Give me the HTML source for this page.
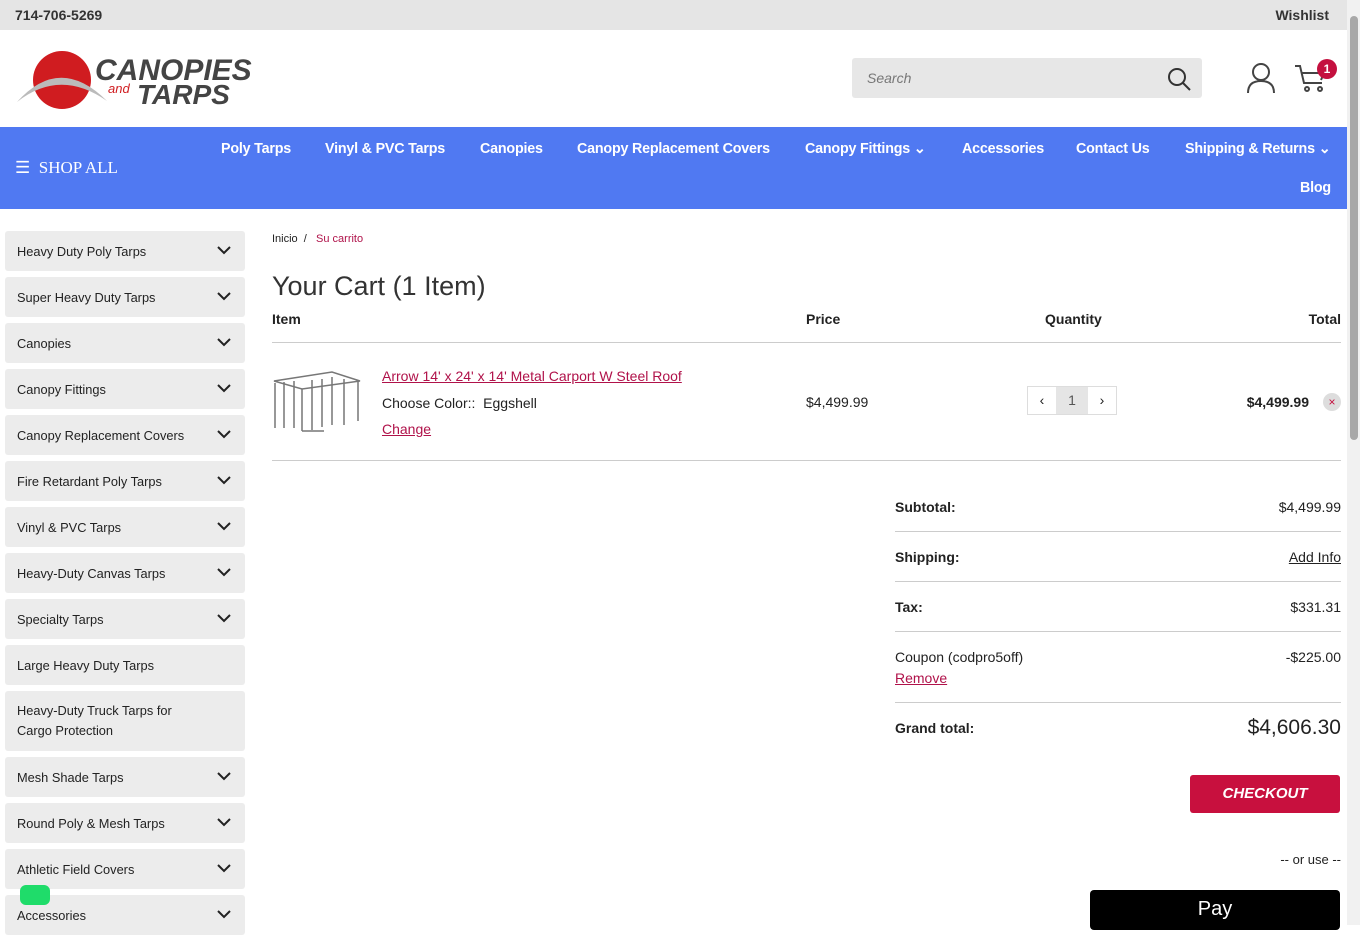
<!DOCTYPE html>
<html><head><meta charset="utf-8"><style>
*{box-sizing:border-box;margin:0;padding:0}
body{width:1360px;height:925px;overflow:hidden;font-family:"Liberation Sans",sans-serif;background:#fff;color:#222;position:relative}
.top{height:30px;background:#e5e5e5;font-size:14px;font-weight:bold;color:#333;position:relative}
.top .l{position:absolute;left:15px;top:7px}.top .r{position:absolute;right:31px;top:7px}
.hdr{height:97px;position:relative}
.search{position:absolute;left:852px;top:28px;width:350px;height:40px;background:#e7e7e7;border-radius:3px;font-style:italic;color:#777;font-size:14px;padding:12px 15px}
.nav{height:82px;background:#5079f2;position:relative;color:#fff}
.nav .sa{position:absolute;left:15px;top:31px;font-family:"Liberation Serif",serif;font-size:17px}
.nav a{position:absolute;font-size:14.3px;font-weight:bold;color:#fff;top:14px;letter-spacing:-.2px}
.side{position:absolute;left:5px;top:231px;width:240px}
.si{background:#ececec;border-radius:3px;height:40px;margin-bottom:6px;font-size:12.8px;padding:13px 12px;position:relative;color:#222}
.si svg{position:absolute;right:14px;top:15px}
.main{position:absolute;left:272px;top:231px;width:1069px}
.row{position:absolute;font-size:14px}
.hr{position:absolute;height:1px;background:#ccc}
.pink{color:#b0124a;text-decoration:underline}
.sb{position:absolute;right:0;top:0;width:13px;height:925px;background:#f1f1f1}
.sb div{position:absolute;left:3px;top:16px;width:8px;height:424px;background:#a8a8a8;border-radius:4px}
</style></head><body>
<div class="top"><span class="l">714-706-5269</span><span class="r">Wishlist</span></div>
<div class="hdr">
<svg style="position:absolute;left:15px;top:16px" width="250" height="64" viewBox="0 0 250 64">
<circle cx="47" cy="34" r="29" fill="#d01c20"/><path d="M2 56 Q45 8 92 55 Q45 22 2 56Z" fill="#bbb"/>
<text x="80" y="34" font-family="Liberation Sans" font-weight="bold" font-style="italic" font-size="30" fill="#444">CANOPIES</text>
<text x="93" y="47" font-family="Liberation Sans" font-style="italic" font-size="13" fill="#d01c20">and</text>
<text x="122" y="58" font-family="Liberation Sans" font-weight="bold" font-style="italic" font-size="28" fill="#444">TARPS</text></svg>
<div class="search">Search</div>
<svg style="position:absolute;left:1166px;top:36px" width="26" height="26" fill="none" stroke="#333" stroke-width="2"><circle cx="11" cy="11" r="8"/><path d="M17 17l7 7"/></svg>
<svg style="position:absolute;left:1245px;top:32px" width="32" height="32" fill="none" stroke="#444" stroke-width="2"><circle cx="16" cy="10" r="8"/><path d="M3 31q0-12 13-12t13 12"/></svg>
<svg style="position:absolute;left:1293px;top:32px" width="36" height="32" fill="none" stroke="#444" stroke-width="2"><path d="M2 4h5l4 17h18"/><path d="M9 11h22l-3 7"/><circle cx="14" cy="27" r="2"/><circle cx="27" cy="27" r="2"/></svg>
<div style="position:absolute;left:1317px;top:29px;width:20px;height:20px;border-radius:50%;background:#c4103f;color:#fff;font-size:12px;font-weight:bold;text-align:center;line-height:20px">1</div>
</div>
<div class="nav"><div class="sa">☰&nbsp; SHOP ALL</div>
<a style="left:221px">Poly Tarps</a><a style="left:325px">Vinyl &amp; PVC Tarps</a><a style="left:480px">Canopies</a><a style="left:577px">Canopy Replacement Covers</a><a style="left:805px">Canopy Fittings ⌄</a><a style="left:962px">Accessories</a><a style="left:1076px">Contact Us</a><a style="left:1185px">Shipping &amp; Returns ⌄</a><a style="left:1300px;top:53px">Blog</a></div>
<div class="side">
<div class="si">Heavy Duty Poly Tarps<svg width="14" height="9"><path d="M1 1l6 6 6-6" stroke="#222" stroke-width="2" fill="none"/></svg></div>
<div class="si">Super Heavy Duty Tarps<svg width="14" height="9"><path d="M1 1l6 6 6-6" stroke="#222" stroke-width="2" fill="none"/></svg></div>
<div class="si">Canopies<svg width="14" height="9"><path d="M1 1l6 6 6-6" stroke="#222" stroke-width="2" fill="none"/></svg></div>
<div class="si">Canopy Fittings<svg width="14" height="9"><path d="M1 1l6 6 6-6" stroke="#222" stroke-width="2" fill="none"/></svg></div>
<div class="si">Canopy Replacement Covers<svg width="14" height="9"><path d="M1 1l6 6 6-6" stroke="#222" stroke-width="2" fill="none"/></svg></div>
<div class="si">Fire Retardant Poly Tarps<svg width="14" height="9"><path d="M1 1l6 6 6-6" stroke="#222" stroke-width="2" fill="none"/></svg></div>
<div class="si">Vinyl &amp; PVC Tarps<svg width="14" height="9"><path d="M1 1l6 6 6-6" stroke="#222" stroke-width="2" fill="none"/></svg></div>
<div class="si">Heavy-Duty Canvas Tarps<svg width="14" height="9"><path d="M1 1l6 6 6-6" stroke="#222" stroke-width="2" fill="none"/></svg></div>
<div class="si">Specialty Tarps<svg width="14" height="9"><path d="M1 1l6 6 6-6" stroke="#222" stroke-width="2" fill="none"/></svg></div>
<div class="si">Large Heavy Duty Tarps</div>
<div class="si" style="height:60px;line-height:20px;padding-top:10px">Heavy-Duty Truck Tarps for<br>Cargo Protection</div>
<div class="si">Mesh Shade Tarps<svg width="14" height="9"><path d="M1 1l6 6 6-6" stroke="#222" stroke-width="2" fill="none"/></svg></div>
<div class="si">Round Poly &amp; Mesh Tarps<svg width="14" height="9"><path d="M1 1l6 6 6-6" stroke="#222" stroke-width="2" fill="none"/></svg></div>
<div class="si">Athletic Field Covers<svg width="14" height="9"><path d="M1 1l6 6 6-6" stroke="#222" stroke-width="2" fill="none"/></svg></div>
<div class="si">Accessories<svg width="14" height="9"><path d="M1 1l6 6 6-6" stroke="#222" stroke-width="2" fill="none"/></svg></div>
</div>
<div style="position:absolute;left:20px;top:885px;width:30px;height:20px;border-radius:6px;background:#1fdc6a"></div>
<div class="main">
<div class="row" style="top:2px;font-size:11px">Inicio &nbsp;/ &nbsp; <span style="color:#b0124a">Su carrito</span></div>
<div class="row" style="top:40px;font-size:27px;color:#333;font-weight:300">Your Cart (1 Item)</div>
<div class="row" style="top:80px;font-weight:bold">Item</div>
<div class="row" style="top:80px;left:534px;font-weight:bold">Price</div>
<div class="row" style="top:80px;left:773px;font-weight:bold">Quantity</div>
<div class="row" style="top:80px;right:0;font-weight:bold">Total</div>
<div class="hr" style="top:111px;width:1069px"></div>
<svg style="position:absolute;left:0;top:138px" width="90" height="64" fill="none" stroke="#777" stroke-width="1.5"><path d="M2 12L60 3l28 9L30 20z"/><path d="M3 14v45M12 13v46M22 12v47M30 20v42M40 11v50M50 10v48M60 8v48M72 10v46M86 12v40M30 62h22"/></svg>
<div class="row pink" style="top:137px;left:110px;font-size:14px">Arrow 14' x 24' x 14' Metal Carport W Steel Roof</div>
<div class="row" style="top:164px;left:110px">Choose Color:: &nbsp;Eggshell</div>
<div class="row pink" style="top:190px;left:110px">Change</div>
<div class="row" style="top:163px;left:534px">$4,499.99</div>
<div style="position:absolute;left:755px;top:155px;width:90px;height:29px;border:1px solid #ddd;display:flex;font-size:14px"><div style="width:28px;text-align:center;line-height:27px">‹</div><div style="width:32px;background:#e5e5e5;text-align:center;line-height:27px;color:#555">1</div><div style="width:28px;text-align:center;line-height:27px">›</div></div>
<div class="row" style="top:163px;right:32px;font-weight:bold">$4,499.99</div>
<div style="position:absolute;right:0;top:162px;width:18px;height:18px;border-radius:50%;background:#ddd;color:#c4103f;font-size:12px;text-align:center;line-height:18px">×</div>
<div class="hr" style="top:229px;width:1069px"></div>
<div class="row" style="top:268px;left:623px;font-weight:bold">Subtotal:</div><div class="row" style="top:268px;right:0">$4,499.99</div>
<div class="hr" style="top:300px;left:623px;width:446px"></div>
<div class="row" style="top:318px;left:623px;font-weight:bold">Shipping:</div><div class="row" style="top:318px;right:0;text-decoration:underline">Add Info</div>
<div class="hr" style="top:350px;left:623px;width:446px"></div>
<div class="row" style="top:368px;left:623px;font-weight:bold">Tax:</div><div class="row" style="top:368px;right:0">$331.31</div>
<div class="hr" style="top:400px;left:623px;width:446px"></div>
<div class="row" style="top:418px;left:623px">Coupon (codpro5off)</div><div class="row" style="top:418px;right:0">-$225.00</div>
<div class="row pink" style="top:439px;left:623px">Remove</div>
<div class="hr" style="top:471px;left:623px;width:446px"></div>
<div class="row" style="top:489px;left:623px;font-weight:bold">Grand total:</div><div class="row" style="top:485px;right:0;font-size:21px">$4,606.30</div>
<div style="position:absolute;left:918px;top:544px;width:150px;height:38px;background:#c8103e;border-radius:3px;color:#fff;font-weight:bold;font-style:italic;text-align:center;line-height:38px;font-size:15px">CHECKOUT</div>
<div class="row" style="top:621px;right:0;font-size:13px">-- or use --</div>
<div style="position:absolute;left:818px;top:659px;width:250px;height:40px;background:#000;border-radius:4px;color:#fff;text-align:center;font-size:20px;line-height:38px"> Pay</div>
</div>
<div class="sb"><div></div></div>
</body></html>
